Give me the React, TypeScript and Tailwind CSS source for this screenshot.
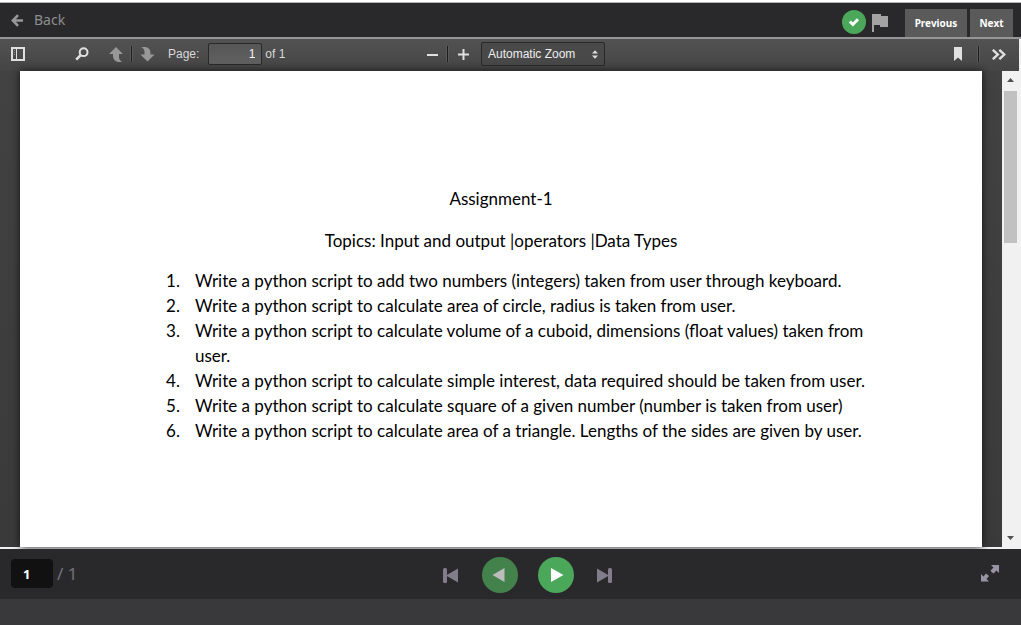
import { useState, type ReactNode } from "react";

const tasks = [
  "Write a python script to add two numbers (integers) taken from user through keyboard.",
  "Write a python script to calculate area of circle, radius is taken from user.",
  "Write a python script to calculate volume of a cuboid, dimensions (float values) taken from user.",
  "Write a python script to calculate simple interest, data required should be taken from user.",
  "Write a python script to calculate square of a given number (number is taken from user)",
  "Write a python script to calculate area of a triangle. Lengths of the sides are given by user.",
];

function ToolButton({ label, className = "", children }: { label: string; className?: string; children: ReactNode }) {
  return (
    <button type="button" aria-label={label} className={"flex h-6 w-6 items-center justify-center text-[#e0e0e0] " + className}>
      {children}
    </button>
  );
}

function Separator() {
  return <span className="block h-4 w-[3px] border-x border-x-[#5a5a5a] bg-[#1d1d1d]" />;
}

function Header() {
  return (
    <header className="flex h-[34px] items-stretch justify-between bg-[#29292b] pr-2">
      <a href="#back" className="flex items-center pl-[11px] font-['Noto_Sans',sans-serif] text-[14px] leading-5 text-[#8e8e8e]">
        <svg width="12" height="13" viewBox="0 0 12 13" className="mr-[11px]" fill="none" stroke="#979797" strokeWidth="2.6" aria-hidden="true">
          <path d="M7 1.2 1.9 6.5 7 11.8M2 6.5H12" />
        </svg>
        Back
      </a>
      <div className="flex items-end">
        <svg width="24" height="24" viewBox="0 0 24 24" className="mb-[3px] mr-1.5" role="img" aria-label="Completed">
          <circle cx="12" cy="12" r="12" fill="#4ba85a" />
          <path d="m7.8 11.500 3.100 3 5.100-5.200" fill="none" stroke="#fff" strokeWidth="3" />
        </svg>
        <button type="button" aria-label="Flag" className="mb-[5px] mr-[17px]">
          <svg width="16" height="18" viewBox="0 0 16 18" fill="#a3a3a3" aria-hidden="true">
            <path d="M0 0h9v2h7v11H8v-2H2v7H0z" />
          </svg>
        </button>
        <nav className="flex gap-[3px] font-['Noto_Sans',sans-serif] text-[10px] font-bold text-white">
          <button type="button" className="h-7 w-[62px] bg-[#5a5a5a]">Previous</button>
          <button type="button" className="h-7 w-[43px] bg-[#5a5a5a]">Next</button>
        </nav>
      </div>
    </header>
  );
}

function Toolbar() {
  const [page, setPage] = useState("1");
  return (
    <div className="mr-0.5 flex h-8 items-center bg-linear-to-b from-[#525252] to-[#454545] pb-0.5 font-['Liberation_Sans',Arial,sans-serif] text-[12px] text-[#d9d9d9]">
      <div className="flex flex-1 items-center pl-1.5">
        <ToolButton label="Toggle sidebar">
          <svg width="14" height="14" viewBox="0 0 14 14" aria-hidden="true">
            <path fill="currentColor" fillRule="evenodd" d="M0 0h14v14H0zM2 2v10h3V2zM6 2v10h6V2z" />
            <path fill="#8a8a8a" d="M3 3h1v1H3zM3 5h1v1H3zM3 7h1v1H3z" />
          </svg>
        </ToolButton>
        <ToolButton label="Find" className="ml-10">
          <svg width="14" height="14" viewBox="0 0 14 14" fill="none" stroke="currentColor" aria-hidden="true">
            <circle cx="8.6" cy="5.2" r="3.9" strokeWidth="2" />
            <path d="M5.7 8.2 1.2 12.7" strokeWidth="2.6" />
          </svg>
        </ToolButton>
        <ToolButton label="Previous page" className="ml-2.5">
          <svg width="15" height="15" viewBox="0 0 15 15" fill="#989898" aria-hidden="true">
            <path d="M7 0 14 7H10v3c0 2 1 3.500 3 5H9C6 14 4 12.500 4 9V7H0z" />
          </svg>
        </ToolButton>
        <span className="ml-0.5"><Separator /></span>
        <ToolButton label="Next page" className="ml-0.5">
          <svg width="15" height="15" viewBox="0 0 15 15" fill="#989898" aria-hidden="true">
            <path d="M7.500 14.500 .5 7.500H4.500V5C4.500 3 3.500 1.500 1.500 0H5.500C9 .5 10.500 2.500 10.500 6v1.500h4z" />
          </svg>
        </ToolButton>
        <label htmlFor="pageNumber" className="ml-[9px]">Page:</label>
        <input
          id="pageNumber"
          value={page}
          onChange={(e) => setPage(e.target.value)}
          className="ml-[9px] mr-[3px] h-[22px] w-[54px] rounded-[2px] border border-[#292929] bg-linear-to-b from-[#565656] to-[#606060] px-1.5 text-right text-[12px] text-[#f2f2f2]"
        />
        <span>of 1</span>
      </div>
      <div className="flex items-center pl-2">
        <ToolButton label="Zoom out">
          <svg width="11" height="11" viewBox="0 0 11 11" aria-hidden="true"><path d="M0 5h11v2H0z" fill="currentColor" /></svg>
        </ToolButton>
        <span className="ml-[2px]"><Separator /></span>
        <ToolButton label="Zoom in" className="ml-[2px]">
          <svg width="11" height="11" viewBox="0 0 11 11" aria-hidden="true"><path d="M0 4.500h4.500V0h2v4.500H11v2H6.500V11h-2V6.500H0z" fill="currentColor" /></svg>
        </ToolButton>
        <div className="ml-1.5 grid h-6 w-[124px] items-center">
          <select aria-label="Zoom" className="col-start-1 row-start-1 h-6 appearance-none rounded-[2px] border border-[#292929] bg-[#494949] pl-1.5 text-[12px] text-[#eeeeee]">
            <option>Automatic Zoom</option>
            <option>Actual Size</option>
            <option>Page Fit</option>
            <option>Page Width</option>
          </select>
          <svg width="6" height="9" viewBox="0 0 6 9" className="pointer-events-none col-start-1 row-start-1 mr-[7px] justify-self-end" fill="#dedede" aria-hidden="true">
            <path d="M0 3.500h6L3 .3zM0 5.500h6L3 8.700z" />
          </svg>
        </div>
      </div>
      <div className="flex flex-1 items-center justify-end pr-2">
        <ToolButton label="Bookmark">
          <svg width="8" height="14" viewBox="0 0 8 14" aria-hidden="true"><path d="M0 0h8v14L4 10.500 0 14z" fill="currentColor" /></svg>
        </ToolButton>
        <span className="ml-[7px]"><Separator /></span>
        <ToolButton label="Tools" className="ml-[7px]">
          <svg width="14" height="11" viewBox="0 0 14 11" fill="none" stroke="currentColor" strokeWidth="2.400" aria-hidden="true">
            <path d="m.8.8 5 4.700-5 4.700M7.300.8l5 4.700-5 4.700" />
          </svg>
        </ToolButton>
      </div>
    </div>
  );
}

function Document() {
  return (
    <div className="flex min-w-0 flex-1 bg-linear-to-b from-[#424242] to-[#3a3a3a] px-5">
      <article className="flex-1 bg-white px-[104px] pt-[115px] font-['Lato','Noto_Sans',sans-serif] text-[17px] text-black shadow-[0_0_8px_#151515]">
        <h1 className="text-center leading-[26px]">Assignment-1</h1>
        <h2 className="mt-4 text-center leading-[26px]">Topics: Input and output |operators |Data Types</h2>
        <ol className="mt-[14px] pl-[42px] leading-[25px]">
          {tasks.map((task, i) => (
            <li key={task} className="flex">
              <span className="w-[29px] shrink-0">{i + 1}.</span>
              <span>{task}</span>
            </li>
          ))}
        </ol>
      </article>
    </div>
  );
}

function Scrollbar() {
  return (
    <div className="mr-0.5 flex w-[17px] flex-col items-center bg-[#f1f1f1]" aria-hidden="true">
      <svg width="17" height="20" viewBox="0 0 17 20" fill="#505050"><path d="M5 11h7L8.500 7z" /></svg>
      <div className="h-[152px] w-[13px] bg-[#c1c1c1]" />
      <svg width="17" height="17" viewBox="0 0 17 17" className="mt-auto" fill="#505050"><path d="M5 6h7l-3.500 4z" /></svg>
    </div>
  );
}

function Footer() {
  const [page, setPage] = useState("1");
  return (
    <footer className="bg-[#39393b] pb-[26px]">
      <div className="flex h-[50px] items-center bg-[#29292b] px-[11px] pb-px font-['Noto_Sans',sans-serif]">
        <div className="flex flex-1 items-center gap-1">
          <input
            aria-label="Slide number"
            value={page}
            onChange={(e) => setPage(e.target.value)}
            className="h-[29px] w-[42px] rounded bg-[#111111] pl-3 text-[13px] font-bold text-white"
          />
          <span className="text-[17px] text-[#74717e]">/ 1</span>
        </div>
        <div className="flex items-center pl-11 pt-[3px]">
          <button type="button" aria-label="First page">
            <svg width="15" height="15" viewBox="0 0 15 15" fill="#817d8b" aria-hidden="true">
              <rect width="4" height="15" rx="1.500" /><path d="M15 .5v14L3 7.500z" />
            </svg>
          </button>
          <button type="button" aria-label="Back one page" className="ml-6">
            <svg width="36" height="36" viewBox="0 0 36 36" aria-hidden="true">
              <circle cx="18" cy="18" r="18" fill="#44824b" /><path d="M22.500 11v14L10.500 18z" fill="#bcbcbc" />
            </svg>
          </button>
          <button type="button" aria-label="Forward one page" className="ml-5">
            <svg width="36" height="36" viewBox="0 0 36 36" aria-hidden="true">
              <circle cx="18" cy="18" r="18" fill="#4ba85a" /><path d="M13 11v14L25.500 18z" fill="#fff" />
            </svg>
          </button>
          <button type="button" aria-label="Last page" className="ml-[23px]">
            <svg width="15" height="15" viewBox="0 0 15 15" fill="#817d8b" aria-hidden="true">
              <path d="M0 .5v14l12-7z" /><rect x="11" width="4" height="15" rx="1.500" />
            </svg>
          </button>
        </div>
        <div className="flex flex-1 justify-end pr-[11px]">
          <button type="button" aria-label="Full screen">
            <svg width="18" height="17" viewBox="0 0 18 17" fill="#9893a5" aria-hidden="true">
              <path d="M10 0h8v8l-2.500-2.500-3 3-2-1.500-1-1.500 3-3zM0 9l2.500 2.500 2.500-3L8 11l-2.500 3L8 16.500H0z" />
            </svg>
          </button>
        </div>
      </div>
    </footer>
  );
}

export default function App() {
  return (
    <div className="flex h-screen flex-col border-t-2 border-white bg-[#f1f1f1]">
      <div className="h-px shrink-0 bg-[#b5b5b5]" />
      <Header />
      <div className="h-0.5 shrink-0 bg-[#969696]" />
      <Toolbar />
      <main className="mb-0.5 flex min-h-0 flex-1">
        <Document />
        <Scrollbar />
      </main>
      <Footer />
    </div>
  );
}
